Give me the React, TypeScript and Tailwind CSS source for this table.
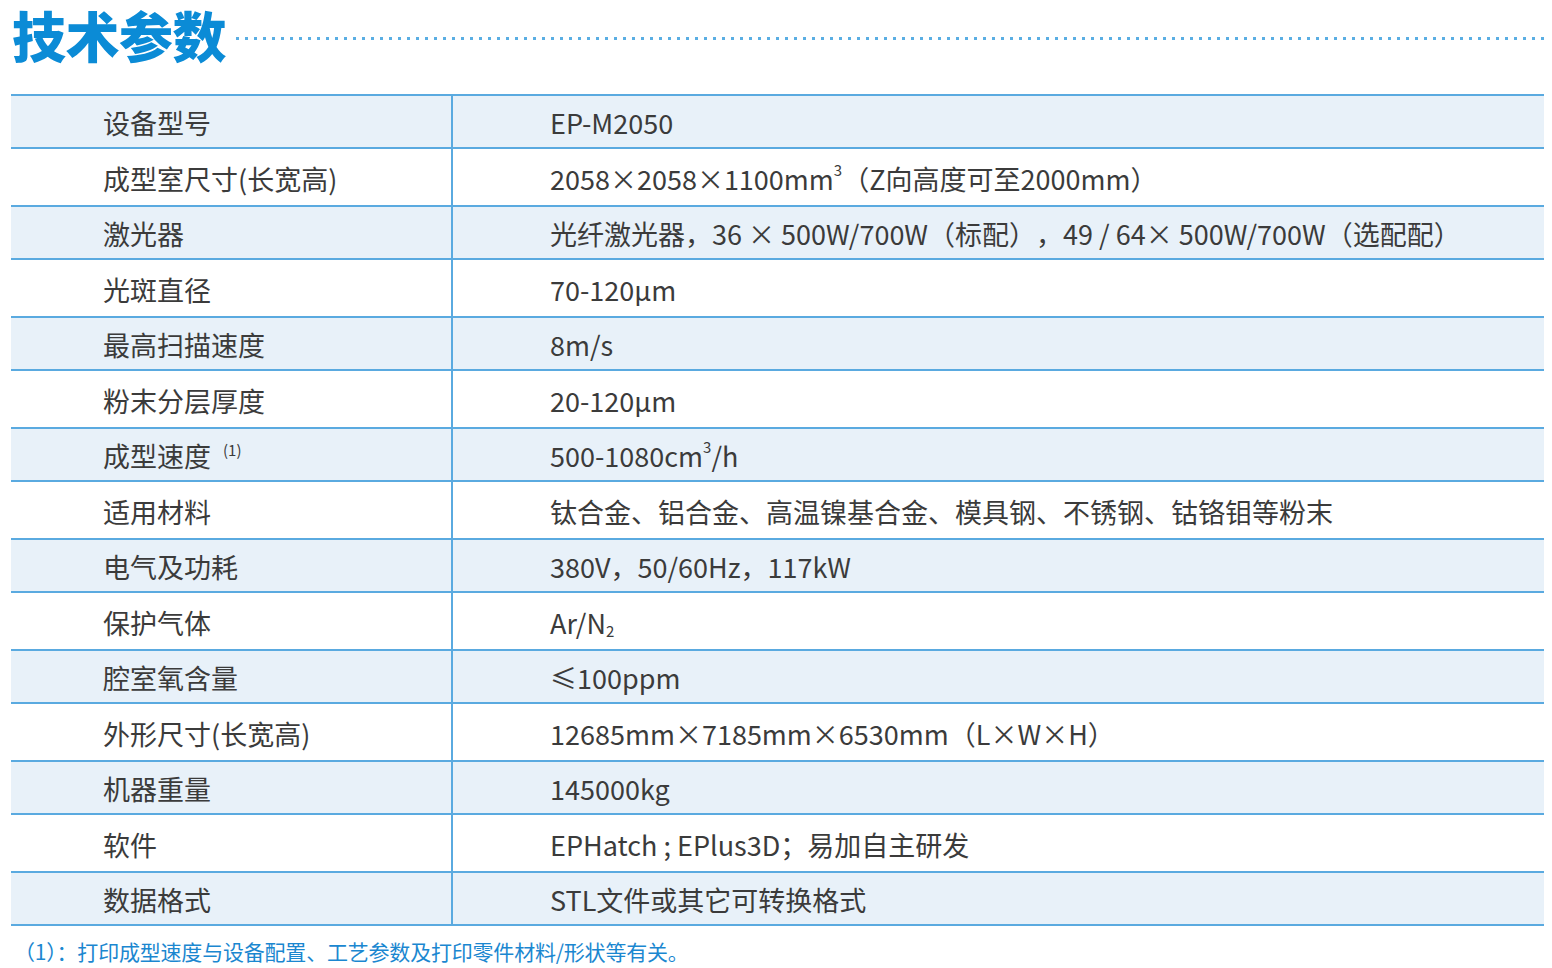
import React from 'react';

interface SpecRow {
  label: React.ReactNode;
  value: React.ReactNode;
}

// small raised / lowered figures, done with spans so preflight's sup/sub sizing doesn't apply
const Sup = ({ children }: { children: React.ReactNode }) => (
  <span className="inline-block text-[15px] leading-none relative -top-[9px]">{children}</span>
);
const Sub = ({ children }: { children: React.ReactNode }) => (
  <span className="inline-block text-[15px] leading-none relative top-[8px]">{children}</span>
);

const rows: SpecRow[] = [
  { label: '设备型号', value: 'EP-M2050' },
  { label: '成型室尺寸(长宽高)', value: <>2058×2058×1100mm<Sup>3</Sup>（Z向高度可至2000mm）</> },
  { label: '激光器', value: '光纤激光器，36 × 500W/700W（标配），49 / 64× 500W/700W（选配配）' },
  { label: '光斑直径', value: '70-120μm' },
  { label: '最高扫描速度', value: '8m/s' },
  { label: '粉末分层厚度', value: '20-120μm' },
  { label: <>成型速度<span className="ml-[12px] inline-block text-[15px] leading-none relative -top-[6px]">(1)</span></>, value: <>500-1080cm<Sup>3</Sup>/h</> },
  { label: '适用材料', value: '钛合金、铝合金、高温镍基合金、模具钢、不锈钢、钴铬钼等粉末' },
  { label: '电气及功耗', value: '380V，50/60Hz，117kW' },
  { label: '保护气体', value: <>Ar/N<Sub>2</Sub></> },
  { label: '腔室氧含量', value: '≤100ppm' },
  { label: '外形尺寸(长宽高)', value: '12685mm×7185mm×6530mm（L×W×H）' },
  { label: '机器重量', value: '145000kg' },
  { label: '软件', value: 'EPHatch ; EPlus3D；易加自主研发' },
  { label: '数据格式', value: 'STL文件或其它可转换格式' },
];

export default function App() {
  return (
    <div className="w-[1552px] h-[968px] bg-white overflow-hidden font-['Noto_Sans_CJK_SC','Noto_Sans',sans-serif] [text-spacing-trim:space-all]">
      {/* heading */}
      <div className="flex items-start h-[76px] pt-[3px] pl-[12px] pr-[2px]">
        <h1 className="text-[54px] leading-[64px] font-black text-[#0b8bd6] tracking-[-0.5px]">技术参数</h1>
        <div className="flex-1 ml-[10px] mt-[34px] h-[3px] bg-[linear-gradient(to_right,#5aaee3_3px,transparent_3px)] bg-[length:9px_3px]" />
      </div>

      {/* table */}
      <div className="mt-[18px] ml-[11px] w-[1533px] border-t-2 border-[#5aaae0]">
        {rows.map((r, i) => {
          const shaded = i % 2 === 0;
          return (
            <div
              key={i}
              className={`flex border-b-2 border-[#5aaae0] text-[27px] leading-none text-[#3b3b3b] ${shaded ? 'bg-[#e8f1f9] h-[53px]' : 'bg-white h-[58px]'}`}
            >
              <div className="w-[440px] shrink-0 flex items-center pl-[92px] pt-[2px] whitespace-nowrap">{r.label}</div>
              <div className="w-[2px] bg-[#5aaae0] -mb-[2px]" />
              <div className="flex-1 flex items-center pl-[97px] pt-[2px] whitespace-nowrap">{r.value}</div>
            </div>
          );
        })}
      </div>

      {/* footnote */}
      <p className="mt-[15px] pl-[14px] text-[21px] leading-none text-[#1b87d0] whitespace-nowrap [text-spacing-trim:normal] tracking-[-0.2px]">
        （1）：打印成型速度与设备配置、工艺参数及打印零件材料/形状等有关。
      </p>
    </div>
  );
}
